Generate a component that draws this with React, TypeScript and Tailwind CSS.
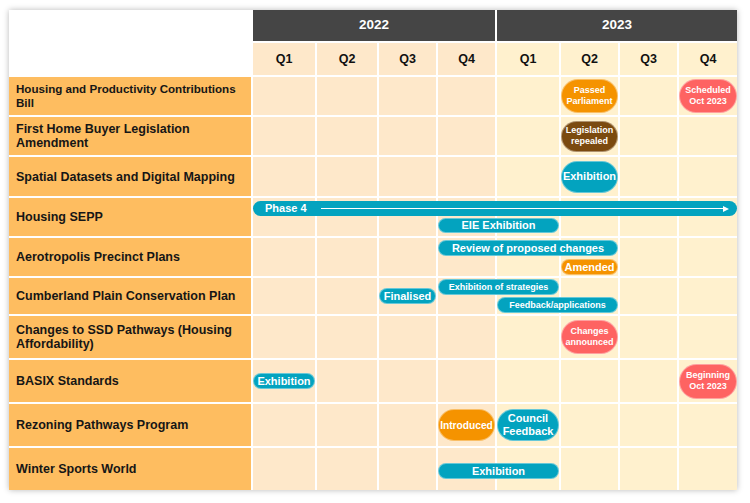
import React from "react";

type Tone = "teal" | "orange" | "brown" | "red";

interface Pill {
  label: React.ReactNode;
  start: number; // quarter index 0..7
  span: number;
  tone: Tone;
  cls: string; // height, text size, row placement
}

interface Row {
  title: string;
  titleSize?: string;
  stack: string;
  pills: Pill[];
}

const toneClass: Record<Tone, string> = {
  teal: "bg-[#03a3bf]",
  orange: "bg-[#f59300]",
  brown: "bg-[#7b4a10]",
  red: "bg-[#fe6362]",
};

const startClass = [
  "col-start-1",
  "col-start-2",
  "col-start-3",
  "col-start-4",
  "col-start-5",
  "col-start-6",
  "col-start-7",
  "col-start-8",
];

const spanClass = [
  "",
  "col-span-1",
  "col-span-2",
  "col-span-3",
  "col-span-4",
  "col-span-5",
  "col-span-6",
  "col-span-7",
  "col-span-8",
];

const rowStart = [
  "",
  "",
  "",
  "row-start-3",
  "row-start-4",
  "row-start-5",
  "row-start-6",
  "row-start-7",
  "row-start-8",
  "row-start-9",
  "row-start-10",
  "row-start-11",
  "row-start-12",
];

const small = "h-[34px] text-[9px] leading-[11px]";
const tall = "h-[32px] text-[11px] leading-[13px]";
const flat = "h-[16px] text-[11px] leading-[16px]";
const tiny = "h-[16px] text-[9px] leading-[16px]";

const rows: Row[] = [
  {
    title: "Housing and Productivity Contributions Bill",
    titleSize: "text-[11.6px]",
    stack: "items-center",
    pills: [
      { label: <>Passed<br />Parliament</>, start: 5, span: 1, tone: "orange", cls: small },
      { label: <>Scheduled<br />Oct 2023</>, start: 7, span: 1, tone: "red", cls: small },
    ],
  },
  {
    title: "First Home Buyer Legislation Amendment",
    stack: "items-center",
    pills: [
      { label: <>Legislation<br />repealed</>, start: 5, span: 1, tone: "brown", cls: "h-[31px] text-[9px] leading-[11px]" },
    ],
  },
  {
    title: "Spatial Datasets and Digital Mapping",
    stack: "items-center",
    pills: [{ label: "Exhibition", start: 5, span: 1, tone: "teal", cls: tall }],
  },
  {
    title: "Housing SEPP",
    stack: "grid-rows-[15px_15px] content-center gap-y-[2px]",
    pills: [
      { label: "EIE Exhibition", start: 3, span: 2, tone: "teal", cls: "row-start-2 h-[15px] text-[11px] leading-[15px]" },
    ],
  },
  {
    title: "Aerotropolis Precinct Plans",
    stack: "grid-rows-[16px_16px] content-center gap-y-[3px]",
    pills: [
      { label: "Review of proposed changes", start: 3, span: 3, tone: "teal", cls: "row-start-1 " + flat },
      { label: "Amended", start: 5, span: 1, tone: "orange", cls: "row-start-2 " + flat },
    ],
  },
  {
    title: "Cumberland Plain Conservation Plan",
    stack: "grid-rows-[16px_16px] content-center gap-y-[2px]",
    pills: [
      { label: "Finalised", start: 2, span: 1, tone: "teal", cls: "row-start-1 row-span-2 self-center " + flat },
      { label: "Exhibition of strategies", start: 3, span: 2, tone: "teal", cls: "row-start-1 " + tiny },
      { label: "Feedback/applications", start: 4, span: 2, tone: "teal", cls: "row-start-2 " + tiny },
    ],
  },
  {
    title: "Changes to SSD Pathways (Housing Affordability)",
    stack: "items-center",
    pills: [
      { label: <>Changes<br />announced</>, start: 5, span: 1, tone: "red", cls: small },
    ],
  },
  {
    title: "BASIX Standards",
    stack: "items-center",
    pills: [
      { label: "Exhibition", start: 0, span: 1, tone: "teal", cls: flat },
      { label: <>Beginning<br />Oct 2023</>, start: 7, span: 1, tone: "red", cls: "h-[35px] text-[9px] leading-[11px]" },
    ],
  },
  {
    title: "Rezoning Pathways Program",
    stack: "items-center",
    pills: [
      { label: "Introduced", start: 3, span: 1, tone: "orange", cls: "h-[32px] text-[10.2px] leading-[13px]" },
      { label: <>Council<br />Feedback</>, start: 4, span: 1, tone: "teal", cls: tall },
    ],
  },
  {
    title: "Winter Sports World",
    stack: "items-center pt-[4px]",
    pills: [{ label: "Exhibition", start: 3, span: 2, tone: "teal", cls: flat }],
  },
];

const quarters = ["Q1", "Q2", "Q3", "Q4", "Q1", "Q2", "Q3", "Q4"];
const yearCell = (i: number) => (i < 4 ? "bg-[#fee8ca]" : "bg-[#fff1ce]");

function PillTag({ pill }: { pill: Pill }) {
  return (
    <div
      className={`${startClass[pill.start]} ${spanClass[pill.span]} ${toneClass[pill.tone]} ${pill.cls} flex items-center justify-center rounded-full border border-white/40 text-center font-bold whitespace-nowrap text-white`}
    >
      <span>{pill.label}</span>
    </div>
  );
}

export default function App() {
  return (
    <div className="h-[503px] w-[750px] bg-white pt-[10px] pl-[9px] font-['Liberation_Sans',Arial,sans-serif]">
      <div className="grid h-[480px] w-[728px] grid-cols-[242px_62px_60px_57px_57px_62px_57px_57px_58px] grid-rows-[31px_32px_38px_38px_39px_38px_38px_36px_42px_42px_42px_42px] gap-[2px] bg-white shadow-[0_0_6px_rgba(0,0,0,0.28)]">
        <div className="col-start-1 row-span-2 row-start-1" />
        <div className="col-span-4 col-start-2 row-start-1 flex items-center justify-center bg-[#454545] text-[13.5px] font-bold text-white">
          2022
        </div>
        <div className="col-span-4 col-start-6 row-start-1 flex items-center justify-center bg-[#454545] text-[13.5px] font-bold text-white">
          2023
        </div>
        {quarters.map((q, i) => (
          <div
            key={`q${i}`}
            className={`row-start-2 flex items-center justify-center text-[12.5px] font-bold text-[#111] ${yearCell(i)}`}
            style={{ gridColumnStart: i + 2 }}
          >
            {q}
          </div>
        ))}

        {rows.map((row, r) => (
          <React.Fragment key={row.title}>
            <div
              className={`${rowStart[r + 3]} ${row.titleSize ?? "text-[12.5px]"} col-start-1 flex items-center bg-[#febd60] pr-[6px] pl-[7px] leading-[14px] font-bold text-[#161616]`}
            >
              {row.title}
            </div>
            {quarters.map((_, i) => (
              <div
                key={i}
                className={`${rowStart[r + 3]} ${yearCell(i)}`}
                style={{ gridColumnStart: i + 2 }}
              />
            ))}
            <div
              className={`${rowStart[r + 3]} col-span-8 col-start-2 grid grid-cols-subgrid ${row.stack}`}
            >
              {r === 3 && (
                <div className="col-span-8 col-start-1 row-start-1 flex h-[15px] items-center rounded-full bg-[#03a3bf] pr-[8px] pl-[12px] text-[11px] font-bold text-white">
                  <span>Phase 4</span>
                  <div className="ml-[14px] flex flex-1 items-center">
                    <div className="h-px flex-1 bg-white" />
                    <svg width="6" height="6" viewBox="0 0 6 6">
                      <path d="M0 0 L6 3 L0 6 Z" fill="white" />
                    </svg>
                  </div>
                </div>
              )}
              {row.pills.map((p, k) => (
                <PillTag key={k} pill={p} />
              ))}
            </div>
          </React.Fragment>
        ))}
      </div>
    </div>
  );
}
